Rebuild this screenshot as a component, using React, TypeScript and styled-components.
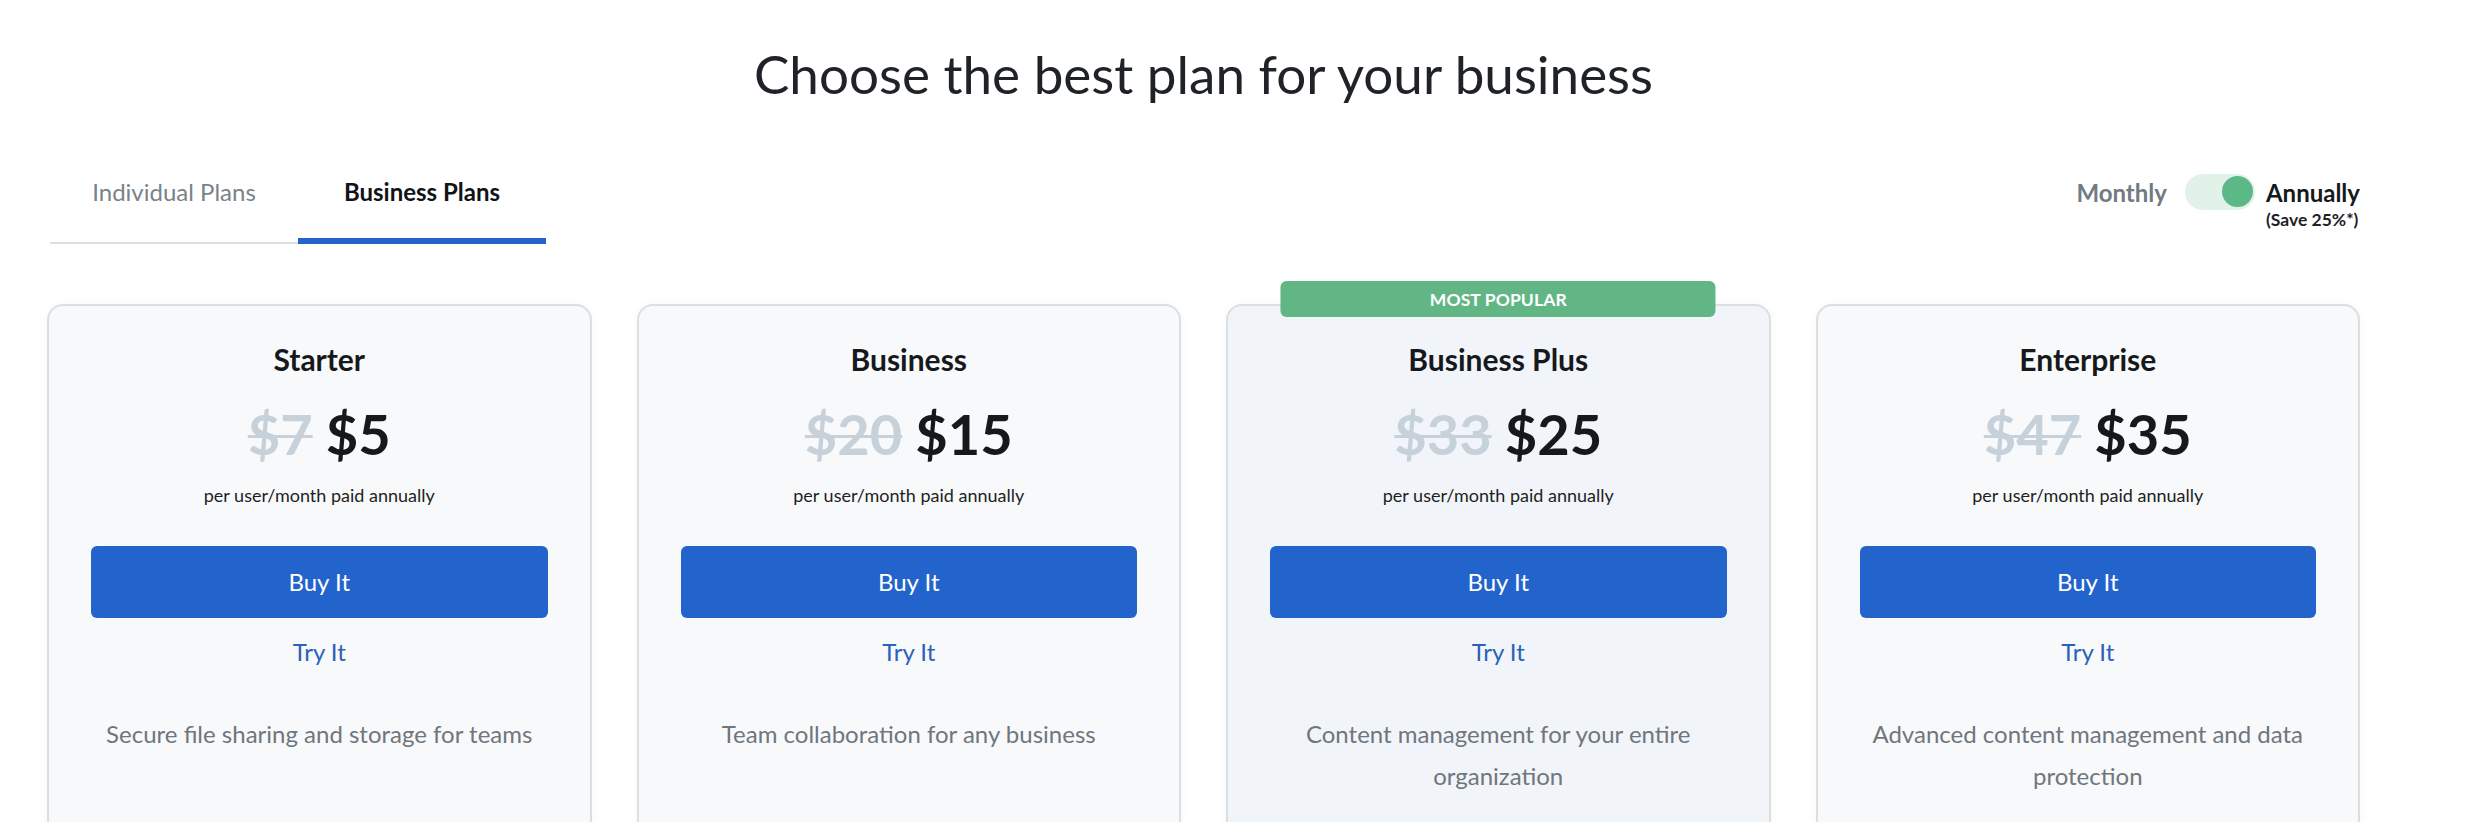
import React from "react";
import styled, { createGlobalStyle } from "styled-components";

const GlobalStyle = createGlobalStyle`
  html, body {
    margin: 0;
    padding: 0;
    background: #ffffff;
  }
  body {
    font-family: Lato, "Open Sans", "Noto Sans", sans-serif;
    color: #212529;
    -webkit-font-smoothing: antialiased;
  }
  * { box-sizing: border-box; }
`;

const Page = styled.main`
  width: 2313px;
  margin-left: 47px;
  padding-top: 42px;
`;

const Title = styled.h1`
  margin: 0;
  font-size: 53px;
  line-height: 1.2;
  font-weight: 400;
  text-align: center;
  color: #1f2327;
`;

const HeaderRow = styled.div`
  display: flex;
  justify-content: space-between;
  align-items: flex-start;
  margin-top: 69px;
`;

const TabList = styled.div`
  display: flex;
  margin-left: 3px;
`;

const Tab = styled.button<{ $active?: boolean }>`
  width: 248px;
  padding: 3px 0 ${(p) => (p.$active ? 32 : 36)}px;
  border: none;
  border-bottom: ${(p) => (p.$active ? "6px solid #2563c9" : "2px solid #dcdfe2")};
  background: transparent;
  font-family: inherit;
  font-size: 24px;
  line-height: 1.2;
  font-weight: ${(p) => (p.$active ? 700 : 400)};
  color: ${(p) => (p.$active ? "#111417" : "#7b8289")};
  cursor: pointer;
`;

const ToggleGroup = styled.div`
  display: flex;
  align-items: flex-start;
  margin-top: -1px;
`;

const ToggleLabel = styled.span<{ $on?: boolean }>`
  margin-top: 5px;
  font-size: 24px;
  line-height: 1.2;
  font-weight: 700;
  color: ${(p) => (p.$on ? "#16191c" : "#727a82")};
`;

const Track = styled.span`
  display: flex;
  align-items: center;
  justify-content: flex-end;
  width: 70px;
  height: 36px;
  margin: 0 11px 0 18px;
  padding: 0 2px;
  border-radius: 18px;
  background: #e1f3e9;
`;

const Knob = styled.span`
  width: 31px;
  height: 31px;
  border-radius: 50%;
  background: #5cb887;
`;

const AnnualBlock = styled.div`
  display: flex;
  flex-direction: column;
`;

const SaveNote = styled.span`
  margin-top: 2px;
  font-size: 17.5px;
  line-height: 1.2;
  font-weight: 700;
  color: #1e2226;
`;

const Cards = styled.section`
  display: grid;
  grid-template-columns: repeat(4, 1fr);
  gap: 45px;
  margin-top: 60px;
`;

const Card = styled.article<{ $featured?: boolean }>`
  position: relative;
  display: flex;
  flex-direction: column;
  align-items: center;
  min-height: 600px;
  padding: 35px 42px 40px;
  border: 2px solid #dcdfe2;
  border-radius: 16px;
  background: ${(p) => (p.$featured ? "#f1f5fa" : "#f8f9fa")};
  box-shadow: 0 0 10px rgba(0, 0, 0, 0.035);
  text-align: center;
`;

const Badge = styled.div`
  position: absolute;
  top: -25px;
  left: 50%;
  transform: translateX(-50%);
  width: 80.5%;
  height: 36px;
  display: flex;
  align-items: center;
  justify-content: center;
  border-radius: 6px;
  background: #62b686;
  color: #ffffff;
  font-size: 17.5px;
  font-weight: 700;
  letter-spacing: 0.1px;
`;

const PlanName = styled.h2`
  margin: 0;
  font-size: 30px;
  line-height: 1.2;
  font-weight: 700;
  color: #16191c;
`;

const Price = styled.div`
  margin-top: 23px;
  font-size: 56px;
  line-height: 1.2;
  font-weight: 700;
  color: #16191c;
`;

const OldPrice = styled.s`
  color: #c7d1da;
  text-decoration-thickness: 3px;
  margin-right: 13px;
`;

const Billing = styled.div`
  margin-top: 17px;
  font-size: 18px;
  line-height: 1.2;
  color: #1c1f22;
`;

const BuyButton = styled.button`
  width: 100%;
  height: 72px;
  margin-top: 40px;
  border: none;
  border-radius: 6px;
  background: #2364cc;
  color: #ffffff;
  font-family: inherit;
  font-size: 24px;
  line-height: 1.2;
  cursor: pointer;
`;

const TryLink = styled.a`
  margin-top: 20px;
  font-size: 24px;
  line-height: 1.2;
  color: #2a62b9;
  text-decoration: none;
  cursor: pointer;
`;

const Description = styled.p`
  margin: 46px 0 0;
  font-size: 24px;
  line-height: 42px;
  color: #6f767d;
`;

type Plan = {
  name: string;
  old: string;
  price: string;
  desc: string;
  featured?: boolean;
};

const plans: Plan[] = [
  { name: "Starter", old: "$7", price: "$5", desc: "Secure file sharing and storage for teams" },
  { name: "Business", old: "$20", price: "$15", desc: "Team collaboration for any business" },
  {
    name: "Business Plus",
    old: "$33",
    price: "$25",
    desc: "Content management for your entire organization",
    featured: true,
  },
  {
    name: "Enterprise",
    old: "$47",
    price: "$35",
    desc: "Advanced content management and data protection",
  },
];

export default function App() {
  return (
    <>
      <GlobalStyle />
      <Page>
        <Title>Choose the best plan for your business</Title>
        <HeaderRow>
          <TabList>
            <Tab>Individual Plans</Tab>
            <Tab $active>Business Plans</Tab>
          </TabList>
          <ToggleGroup>
            <ToggleLabel>Monthly</ToggleLabel>
            <Track>
              <Knob />
            </Track>
            <AnnualBlock>
              <ToggleLabel $on>Annually</ToggleLabel>
              <SaveNote>(Save 25%*)</SaveNote>
            </AnnualBlock>
          </ToggleGroup>
        </HeaderRow>
        <Cards>
          {plans.map((p) => (
            <Card key={p.name} $featured={p.featured}>
              {p.featured && <Badge>MOST POPULAR</Badge>}
              <PlanName>{p.name}</PlanName>
              <Price>
                <OldPrice>{p.old}</OldPrice>
                {p.price}
              </Price>
              <Billing>per user/month paid annually</Billing>
              <BuyButton>Buy It</BuyButton>
              <TryLink>Try It</TryLink>
              <Description>{p.desc}</Description>
            </Card>
          ))}
        </Cards>
      </Page>
    </>
  );
}
